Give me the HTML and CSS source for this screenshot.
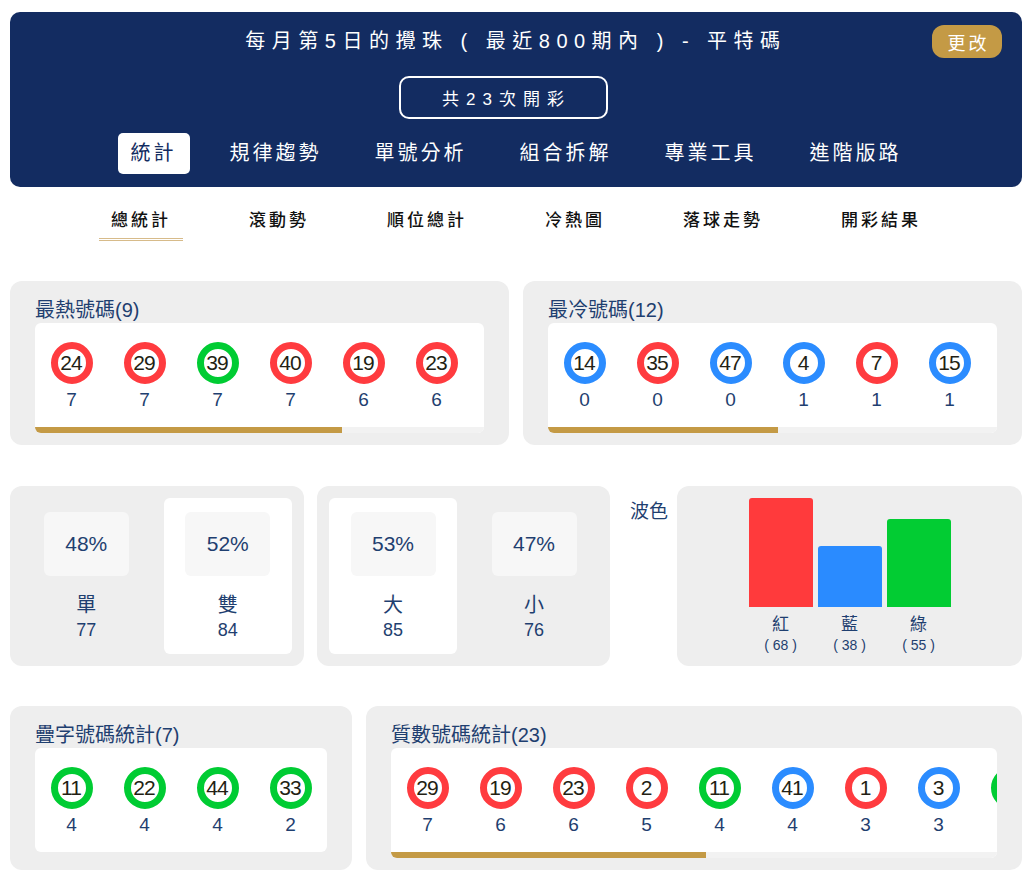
FILE: index.html
```html
<!DOCTYPE html>
<html lang="zh-Hant">
<head>
    <meta charset="UTF-8">
    <meta name="viewport" content="width=device-width, initial-scale=1.0">
    <title>平特碼統計</title>
    <link rel="stylesheet" href="styles.css">
</head>
<body>
<div class="page">
    <header class="top">
        <h1 class="top-title">每月第5日的攪珠 ( 最近800期內 ) - 平特碼</h1>
        <button class="change-btn">更改</button>
        <div class="draw-count">共23次開彩</div>
        <nav class="main-nav">
            <a class="main-tab active">統計</a>
            <a class="main-tab">規律趨勢</a>
            <a class="main-tab">單號分析</a>
            <a class="main-tab">組合拆解</a>
            <a class="main-tab">專業工具</a>
            <a class="main-tab">進階版路</a>
        </nav>
    </header>

    <nav class="sub-nav">
        <a class="sub-tab active">總統計</a>
        <a class="sub-tab">滾動勢</a>
        <a class="sub-tab">順位總計</a>
        <a class="sub-tab">冷熱圖</a>
        <a class="sub-tab">落球走勢</a>
        <a class="sub-tab">開彩結果</a>
    </nav>

    <section class="row">
        <div class="card card-hot">
            <div class="card-title">最熱號碼(9)</div>
            <div class="ball-box">
                <div class="ball-list">
                    <div class="ball-item"><span class="ball red">24</span><span class="ball-count">7</span></div>
                    <div class="ball-item"><span class="ball red">29</span><span class="ball-count">7</span></div>
                    <div class="ball-item"><span class="ball green">39</span><span class="ball-count">7</span></div>
                    <div class="ball-item"><span class="ball red">40</span><span class="ball-count">7</span></div>
                    <div class="ball-item"><span class="ball red">19</span><span class="ball-count">6</span></div>
                    <div class="ball-item"><span class="ball red">23</span><span class="ball-count">6</span></div>
                    <div class="ball-item"><span class="ball blue">20</span><span class="ball-count">6</span></div>
                    <div class="ball-item"><span class="ball green">16</span><span class="ball-count">5</span></div>
                    <div class="ball-item"><span class="ball red">8</span><span class="ball-count">5</span></div>
                </div>
                <div class="scroll-track"><div class="scroll-thumb" style="width: 68.4%"></div></div>
            </div>
        </div>
        <div class="card card-grow">
            <div class="card-title">最冷號碼(12)</div>
            <div class="ball-box">
                <div class="ball-list">
                    <div class="ball-item"><span class="ball blue">14</span><span class="ball-count">0</span></div>
                    <div class="ball-item"><span class="ball red">35</span><span class="ball-count">0</span></div>
                    <div class="ball-item"><span class="ball blue">47</span><span class="ball-count">0</span></div>
                    <div class="ball-item"><span class="ball blue">4</span><span class="ball-count">1</span></div>
                    <div class="ball-item"><span class="ball red">7</span><span class="ball-count">1</span></div>
                    <div class="ball-item"><span class="ball blue">15</span><span class="ball-count">1</span></div>
                    <div class="ball-item"><span class="ball green">27</span><span class="ball-count">1</span></div>
                    <div class="ball-item"><span class="ball blue">36</span><span class="ball-count">1</span></div>
                    <div class="ball-item"><span class="ball green">43</span><span class="ball-count">1</span></div>
                    <div class="ball-item"><span class="ball red">13</span><span class="ball-count">2</span></div>
                    <div class="ball-item"><span class="ball blue">26</span><span class="ball-count">2</span></div>
                    <div class="ball-item"><span class="ball red">45</span><span class="ball-count">2</span></div>
                </div>
                <div class="scroll-track"><div class="scroll-thumb" style="width: 51.2%"></div></div>
            </div>
        </div>
    </section>

    <section class="row row-mid">
        <div class="split-card split-a">
            <div class="split-cell">
                <div class="pct-box">48%</div>
                <div class="split-label">單</div>
                <div class="split-count">77</div>
            </div>
            <div class="split-cell on">
                <div class="pct-box">52%</div>
                <div class="split-label">雙</div>
                <div class="split-count">84</div>
            </div>
        </div>
        <div class="split-card split-b">
            <div class="split-cell on">
                <div class="pct-box">53%</div>
                <div class="split-label">大</div>
                <div class="split-count">85</div>
            </div>
            <div class="split-cell">
                <div class="pct-box">47%</div>
                <div class="split-label">小</div>
                <div class="split-count">76</div>
            </div>
        </div>
        <div class="wave">
            <div class="wave-title">波色</div>
            <div class="wave-chart">
                <div class="bar-col">
                    <div class="bar-area"><div class="bar red-bar" style="height: 109px"></div></div>
                    <div class="bar-label">紅</div>
                    <div class="bar-value">( 68 )</div>
                </div>
                <div class="bar-col">
                    <div class="bar-area"><div class="bar blue-bar" style="height: 61px"></div></div>
                    <div class="bar-label">藍</div>
                    <div class="bar-value">( 38 )</div>
                </div>
                <div class="bar-col">
                    <div class="bar-area"><div class="bar green-bar" style="height: 88px"></div></div>
                    <div class="bar-label">綠</div>
                    <div class="bar-value">( 55 )</div>
                </div>
            </div>
        </div>
    </section>

    <section class="row">
        <div class="card card-pair">
            <div class="card-title">疊字號碼統計(7)</div>
            <div class="ball-box">
                <div class="ball-list">
                    <div class="ball-item"><span class="ball green">11</span><span class="ball-count">4</span></div>
                    <div class="ball-item"><span class="ball green">22</span><span class="ball-count">4</span></div>
                    <div class="ball-item"><span class="ball green">44</span><span class="ball-count">4</span></div>
                    <div class="ball-item"><span class="ball green">33</span><span class="ball-count">2</span></div>
                </div>
            </div>
        </div>
        <div class="card card-grow">
            <div class="card-title">質數號碼統計(23)</div>
            <div class="ball-box">
                <div class="ball-list">
                    <div class="ball-item"><span class="ball red">29</span><span class="ball-count">7</span></div>
                    <div class="ball-item"><span class="ball red">19</span><span class="ball-count">6</span></div>
                    <div class="ball-item"><span class="ball red">23</span><span class="ball-count">6</span></div>
                    <div class="ball-item"><span class="ball red">2</span><span class="ball-count">5</span></div>
                    <div class="ball-item"><span class="ball green">11</span><span class="ball-count">4</span></div>
                    <div class="ball-item"><span class="ball blue">41</span><span class="ball-count">4</span></div>
                    <div class="ball-item"><span class="ball red">1</span><span class="ball-count">3</span></div>
                    <div class="ball-item"><span class="ball blue">3</span><span class="ball-count">3</span></div>
                    <div class="ball-item"><span class="ball green">43</span><span class="ball-count">3</span></div>
                    <div class="ball-item"><span class="ball green">5</span><span class="ball-count">2</span></div>
                </div>
                <div class="scroll-track"><div class="scroll-thumb" style="width: 52%"></div></div>
            </div>
        </div>
    </section>
</div>
</body>
</html>
```

FILE: styles.css
```css
body {
    margin: 0;
    background: #fff;
    font-family: "Liberation Sans", "Noto Sans CJK TC", sans-serif;
    color: #1f3f70;
}

.page {
    padding: 12px 2px 0 10px;
}

/* header */
.top {
    position: relative;
    background: #132c61;
    border-radius: 10px;
    padding: 14px 0 13px;
    display: flex;
    flex-direction: column;
    align-items: center;
    color: #fff;
}

.top-title {
    margin: 0;
    font-size: 20px;
    font-weight: normal;
    line-height: 30px;
    letter-spacing: 6.5px;
}

.change-btn {
    position: absolute;
    top: 13px;
    right: 20px;
    width: 70px;
    height: 33px;
    border: none;
    border-radius: 12px;
    background: #c49a45;
    color: #fff;
    font-family: inherit;
    font-size: 18px;
    letter-spacing: 3px;
    padding: 0 0 0 3px;
}

.draw-count {
    margin-top: 20px;
    margin-right: 26px;
    width: 209px;
    height: 43px;
    box-sizing: border-box;
    border: 2px solid #fff;
    border-radius: 10px;
    display: flex;
    align-items: center;
    justify-content: center;
    font-size: 17px;
    letter-spacing: 7px;
    padding-left: 7px;
}

.main-nav {
    margin-top: 14px;
    display: flex;
    gap: 27px;
}

.main-tab {
    padding: 0 13px;
    line-height: 41px;
    font-size: 20px;
    letter-spacing: 3px;
    border-radius: 5px;
    color: #fff;
}

.main-tab.active {
    background: #fff;
    color: #132c61;
}

/* sub tabs */
.sub-nav {
    margin-top: 12px;
    display: flex;
    justify-content: center;
    gap: 54px;
}

.sub-tab {
    padding: 10px 12px 5px;
    font-size: 17px;
    font-weight: 500;
    line-height: 24px;
    letter-spacing: 3px;
    color: #111;
    border-bottom: 3px solid transparent;
}

.sub-tab.active {
    border-bottom: 3px double #d7bb8a;
}

/* rows */
.row {
    display: flex;
    gap: 14px;
    margin-top: 40px;
}

.row-mid {
    margin-top: 41px;
    gap: 0;
}

.card {
    height: 164px;
    box-sizing: border-box;
    background: #eee;
    border-radius: 12px;
    padding: 16px 25px 12px;
}

.card-hot {
    width: 499px;
}

.card-pair {
    width: 342px;
}

.card-grow {
    flex: 1;
    min-width: 0;
}

.card-title {
    font-size: 20px;
    line-height: 26px;
    color: #1f3f70;
}

.ball-box {
    background: #fff;
    border-radius: 6px;
    overflow: hidden;
}

.ball-list {
    display: flex;
    padding: 19px 0 16px;
}

.ball-item {
    flex: 0 0 73px;
    display: flex;
    flex-direction: column;
    align-items: center;
}

.ball {
    width: 42px;
    height: 42px;
    box-sizing: border-box;
    border: 7px solid #ff3b3f;
    border-radius: 50%;
    display: flex;
    align-items: center;
    justify-content: center;
    font-size: 21px;
    color: #231f14;
    letter-spacing: -1px;
    text-indent: -1px;
}

.ball.red { border-color: #ff3b3f; }
.ball.green { border-color: #00cc33; }
.ball.blue { border-color: #2b8cff; }

.ball-count {
    margin-top: 5px;
    font-size: 19px;
    line-height: 22px;
    color: #1f3f70;
}

.scroll-track {
    height: 6px;
    background: #f2f2f2;
}

.scroll-thumb {
    height: 100%;
    background: #c49a45;
}

/* odd / even, big / small */
.split-card {
    height: 180px;
    box-sizing: border-box;
    background: #eee;
    border-radius: 12px;
    padding: 12px;
    display: flex;
    gap: 13px;
}

.split-a {
    width: 294px;
    margin-right: 13px;
}

.split-b {
    width: 293px;
}

.split-cell {
    flex: 1;
    border-radius: 6px;
    padding-top: 14px;
    display: flex;
    flex-direction: column;
    align-items: center;
}

.split-cell.on {
    background: #fff;
}

.pct-box {
    width: 85px;
    height: 64px;
    border-radius: 6px;
    background: #f7f7f7;
    display: flex;
    align-items: center;
    justify-content: center;
    font-size: 21px;
}

.split-label {
    margin-top: 17px;
    font-size: 20px;
    line-height: 24px;
}

.split-count {
    margin-top: 2px;
    font-size: 18px;
    line-height: 22px;
}

/* wave colour chart */
.wave {
    flex: 1;
    display: flex;
    margin-left: 20px;
}

.wave-title {
    width: 47px;
    margin-top: 13px;
    font-size: 19px;
    line-height: 26px;
}

.wave-chart {
    flex: 1;
    height: 180px;
    box-sizing: border-box;
    background: #eee;
    border-radius: 12px;
    padding-top: 12px;
    display: flex;
    justify-content: center;
    gap: 5px;
}

.bar-col {
    width: 64px;
    display: flex;
    flex-direction: column;
    align-items: center;
}

.bar-area {
    height: 109px;
    width: 100%;
    display: flex;
    align-items: flex-end;
}

.bar {
    width: 100%;
    border-radius: 3px 3px 0 0;
}

.red-bar { background: #ff3a3c; }
.blue-bar { background: #2a8bff; }
.green-bar { background: #02cc33; }

.bar-label {
    margin-top: 7px;
    font-size: 17px;
    line-height: 22px;
}

.bar-value {
    font-size: 14px;
    line-height: 18px;
}
```
